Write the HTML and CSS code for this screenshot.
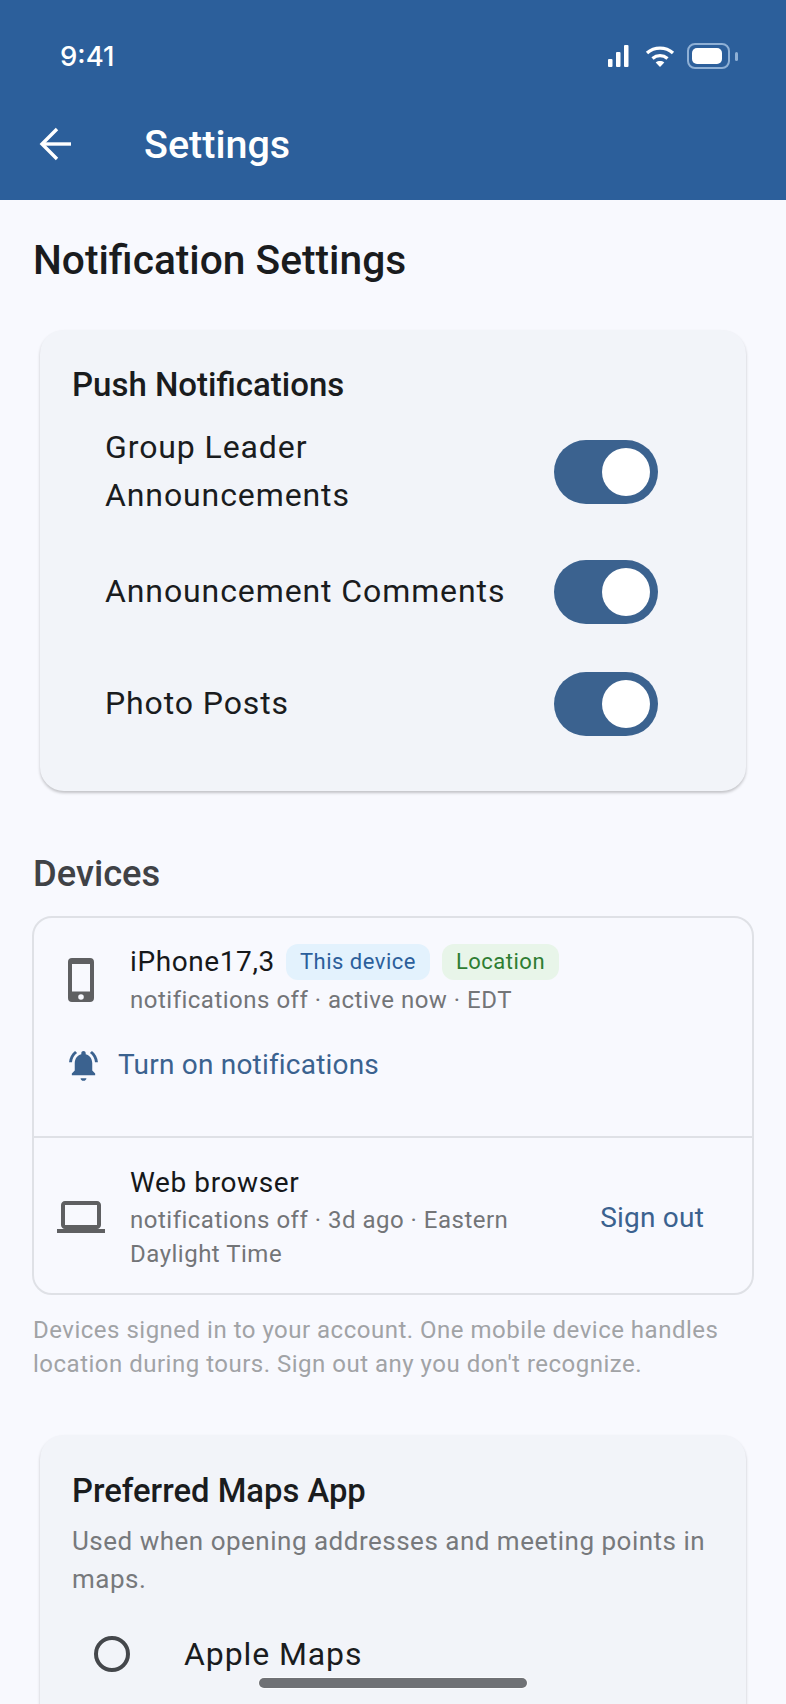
FILE: index.html
```html
<!DOCTYPE html>
<html lang="en">
<head>
  <meta charset="UTF-8">
  <meta name="viewport" content="width=device-width, initial-scale=1.0">
  <title>Settings</title>
  <link rel="stylesheet" href="styles.css">
</head>
<body>
  <div class="screen">
    <header class="app-header">
      <div class="status-bar">
        <span class="clock">9:41</span>
        <div class="status-icons">
          <svg class="icon-signal" width="24" height="24" viewBox="0 0 24 24"><rect x="2" y="15" width="4.5" height="8" rx="1" fill="#fff"/><rect x="10" y="8" width="4.5" height="15" rx="1" fill="#fff"/><rect x="18" y="1" width="4.5" height="22" rx="1" fill="#fff"/></svg>
          <svg class="icon-wifi" width="30" height="24" viewBox="0 0 30 24" fill="none" stroke="#fff" stroke-width="3.4"><path d="M2 9c7.500-6.500 18.500-6.500 26 0"/><path d="M7.500 14.500c4.500-3.800 10.500-3.800 15 0"/><path d="M15 23l-4.300-4.600c2.500-1.900 6.100-1.900 8.600 0z" fill="#fff" stroke="none"/></svg>
          <div class="battery"><span class="battery-fill"></span></div>
          <span class="battery-cap"></span>
        </div>
      </div>
      <div class="toolbar">
        <svg class="back-icon" width="36" height="36" viewBox="0 0 36 36" fill="none" stroke="#fff" stroke-width="3.4"><path d="M33 18H5"/><path d="M19 3 4 18 19 33"/></svg>
        <h1 class="toolbar-title">Settings</h1>
      </div>
    </header>

    <main class="content">
      <h2 class="page-title">Notification Settings</h2>

      <section class="card card-push">
        <h3 class="card-title">Push Notifications</h3>
        <div class="switch-row switch-row-first">
          <span class="switch-label">Group Leader Announcements</span>
          <span class="switch"><span class="thumb"></span></span>
        </div>
        <div class="switch-row">
          <span class="switch-label">Announcement Comments</span>
          <span class="switch"><span class="thumb"></span></span>
        </div>
        <div class="switch-row">
          <span class="switch-label">Photo Posts</span>
          <span class="switch"><span class="thumb"></span></span>
        </div>
      </section>

      <h2 class="section-title">Devices</h2>
      <section class="devices">
        <div class="device device-current">
          <div class="device-main">
            <svg class="device-icon" width="48" height="48" viewBox="0 0 24 24" fill="#5f6062"><path fill-rule="evenodd" d="M7 1h9c1.300 0 2 .7 2 2v18c0 1.300-.7 2-2 2H7c-1.300 0-2-.7-2-2V3c0-1.300.7-2 2-2zM7 4v13.800h9V4zM11.500 19.100a1.400 1.400 0 1 0 0 2.800 1.400 1.400 0 0 0 0-2.800z"/></svg>
            <div class="device-info">
              <div class="device-name-row">
                <span class="device-name">iPhone17,3</span>
                <span class="chip chip-blue">This device</span>
                <span class="chip chip-green">Location</span>
              </div>
              <div class="device-meta">notifications off · active now · EDT</div>
            </div>
          </div>
          <div class="notify-link">
            <svg width="35" height="35" viewBox="0 0 24 24" fill="#3b628f"><path d="M12 22.500c1.200 0 2-.8 2-1.800h-4c0 1 .8 1.800 2 1.800zM18 15.500v-5c0-3.100-1.600-5.600-4.500-6.300v-.7C13.500 2.600 12.800 2 12 2s-1.500.6-1.500 1.500v.7C7.600 4.900 6 7.400 6 10.500v5l-2 2v1.200h16v-1.200z"/><path d="M7.600 3.400 6.200 2C3.800 3.800 2.300 6.600 2.100 9.800h2c.2-2.600 1.500-5 3.500-6.400zM19.900 9.800h2c-.2-3.200-1.700-6-4.100-7.800l-1.400 1.400c2 1.400 3.300 3.800 3.500 6.400z"/></svg>
            <span>Turn on notifications</span>
          </div>
        </div>
        <div class="device device-web">
          <svg class="device-icon laptop-icon" width="48" height="48" viewBox="0 0 24 24" fill="#5f6062"><path d="M20 18c1.100 0 2-.9 2-2V6c0-1.100-.9-2-2-2H4c-1.100 0-2 .9-2 2v10c0 1.100.9 2 2 2H0v2h24v-2zM4 6h16v10H4z"/></svg>
          <div class="device-info">
            <div class="device-name">Web browser</div>
            <div class="device-meta">notifications off · 3d ago · Eastern Daylight Time</div>
          </div>
          <span class="sign-out">Sign out</span>
        </div>
      </section>
      <p class="devices-note">Devices signed in to your account. One mobile device handles location during tours. Sign out any you don't recognize.</p>

      <section class="card card-maps">
        <h3 class="card-title">Preferred Maps App</h3>
        <p class="card-desc">Used when opening addresses and meeting points in maps.</p>
        <div class="radio-row">
          <span class="radio"></span>
          <span class="radio-label">Apple Maps</span>
        </div>
      </section>
    </main>

    <div class="home-indicator"></div>
  </div>
</body>
</html>
```
FILE: styles.css
```css
* {
  box-sizing: border-box;
}

html, body {
  margin: 0;
  padding: 0;
}

body {
  font-family: Roboto, "Liberation Sans", sans-serif;
  background-color: #f8f9fe;
  color: #1a1c1e;
}

.screen {
  position: relative;
  width: 786px;
  height: 1704px;
  overflow: hidden;
  background-color: #f8f9fe;
}

/* Header */
.app-header {
  height: 200px;
  background-color: #2c5f9b;
  color: #fff;
  padding: 0 48px 0 0;
}

.status-bar {
  height: 112px;
  display: flex;
  align-items: center;
  justify-content: space-between;
  padding-left: 60px;
}

.clock {
  font-family: Inter, Roboto, sans-serif;
  font-size: 27.5px;
  font-weight: 500;
}

.status-icons {
  display: flex;
  align-items: center;
}

.icon-signal {
  margin-right: 15px;
}

.icon-wifi {
  margin-right: 12px;
}

.battery {
  width: 43px;
  height: 26px;
  border: 2px solid #8fb0d5;
  border-radius: 8px;
  padding: 3px;
}

.battery-fill {
  display: block;
  width: 30px;
  height: 16px;
  background-color: #fff;
  border-radius: 5px;
}

.battery-cap {
  width: 3px;
  height: 9px;
  margin-left: 5px;
  background-color: #8fb0d5;
  border-radius: 2px;
}

.toolbar {
  display: flex;
  align-items: center;
  height: 64px;
  padding-left: 38px;
}

.toolbar-title {
  margin: 0 0 0 70px;
  font-size: 39.5px;
  font-weight: 500;
}

/* Content */
.content {
  padding: 32px 33px 0;
}

.page-title {
  margin: 0;
  font-size: 40.7px;
  line-height: 56px;
  font-weight: 500;
}

.card {
  margin: 0 7px;
  background-color: #f2f4f9;
  border-radius: 24px;
  box-shadow: 0 2px 3px rgba(0, 0, 0, 0.22);
  padding: 33px 32px;
}

.card-push {
  height: 461px;
  margin-top: 42px;
}

.card-title {
  margin: 0;
  font-size: 33px;
  line-height: 44px;
  font-weight: 500;
}

.switch-row {
  display: flex;
  align-items: center;
  justify-content: space-between;
  padding-left: 33px;
  padding-right: 56px;
  margin-top: 48px;
}

.switch-row-first {
  margin-top: 16px;
  margin-bottom: -9px;
}

.switch-label {
  max-width: 410px;
  padding-bottom: 2px;
  font-size: 32px;
  line-height: 48px;
  letter-spacing: 0.9px;
}

.switch {
  flex: none;
  display: flex;
  align-items: center;
  justify-content: flex-end;
  width: 104px;
  height: 64px;
  padding-right: 8px;
  border-radius: 32px;
  background-color: #3b628f;
}

.thumb {
  width: 48px;
  height: 48px;
  border-radius: 50%;
  background-color: #fff;
}

.section-title {
  margin: 59px 0 0;
  font-size: 36.3px;
  line-height: 48px;
  font-weight: 500;
  color: #404246;
}

/* Devices */
.devices {
  margin: 18px -1px 0;
  height: 379px;
  border: 2px solid #dfe1e6;
  border-radius: 20px;
}

.device-current {
  height: 220px;
  border-bottom: 2px solid #dfe1e6;
  padding: 24px 0 0 24px;
}

.device-main,
.device-web {
  display: flex;
  align-items: center;
}

.device-icon {
  flex: none;
}

.device-info {
  margin-left: 24px;
}

.device-name-row {
  display: flex;
  align-items: center;
}

.device-name {
  font-size: 28px;
  line-height: 40px;
  letter-spacing: 0.6px;
  color: #16181a;
}

.chip {
  margin-left: 12px;
  padding: 0 14px;
  border-radius: 12px;
  font-size: 22px;
  line-height: 36px;
  letter-spacing: 0.5px;
}

.device-name-row .chip-blue {
  margin-left: 11px;
}

.chip-blue {
  background-color: #e3f2fd;
  color: #2c5f9b;
}

.chip-green {
  background-color: #e8f5e9;
  color: #2e7d32;
}

.device-meta {
  font-size: 24px;
  line-height: 34px;
  letter-spacing: 0.5px;
  color: #737578;
}

.device-main .device-meta {
  margin-top: 1px;
}

.notify-link {
  display: flex;
  align-items: center;
  gap: 17px;
  margin-top: 28px;
  padding-left: 8px;
  font-size: 28px;
  line-height: 40px;
  letter-spacing: 0.2px;
  color: #3b628f;
}

.device-web {
  padding: 25px 48px 0 23px;
}

.device-web .device-info {
  margin-left: 25px;
  width: 400px;
}

.sign-out {
  margin-left: auto;
  font-size: 28px;
  letter-spacing: 0.2px;
  color: #3b628f;
}

.devices-note {
  margin: 18px 0 0;
  font-size: 24px;
  line-height: 34px;
  letter-spacing: 0.5px;
  color: #a1a3a6;
}

.card-maps {
  margin-top: 54px;
  height: 300px;
  padding-top: 34px;
}

.card-maps .card-title {
  font-size: 32.8px;
}

.card-desc {
  margin: 9px 0 0;
  font-size: 26px;
  line-height: 38px;
  letter-spacing: 0.5px;
  color: #77797c;
}

.radio-row {
  display: flex;
  align-items: center;
  margin-top: 32px;
  padding-left: 22px;
}

.radio {
  width: 36px;
  height: 36px;
  border: 4px solid #44474b;
  border-radius: 50%;
}

.radio-label {
  margin-left: 54px;
  font-size: 32px;
  line-height: 48px;
  letter-spacing: 0.9px;
}

.home-indicator {
  position: absolute;
  left: 259px;
  bottom: 16px;
  width: 268px;
  height: 10px;
  border-radius: 5px;
  background-color: #6f7175;
  box-shadow: 0 0 0 1px rgba(255, 255, 255, 0.6);
}
```
